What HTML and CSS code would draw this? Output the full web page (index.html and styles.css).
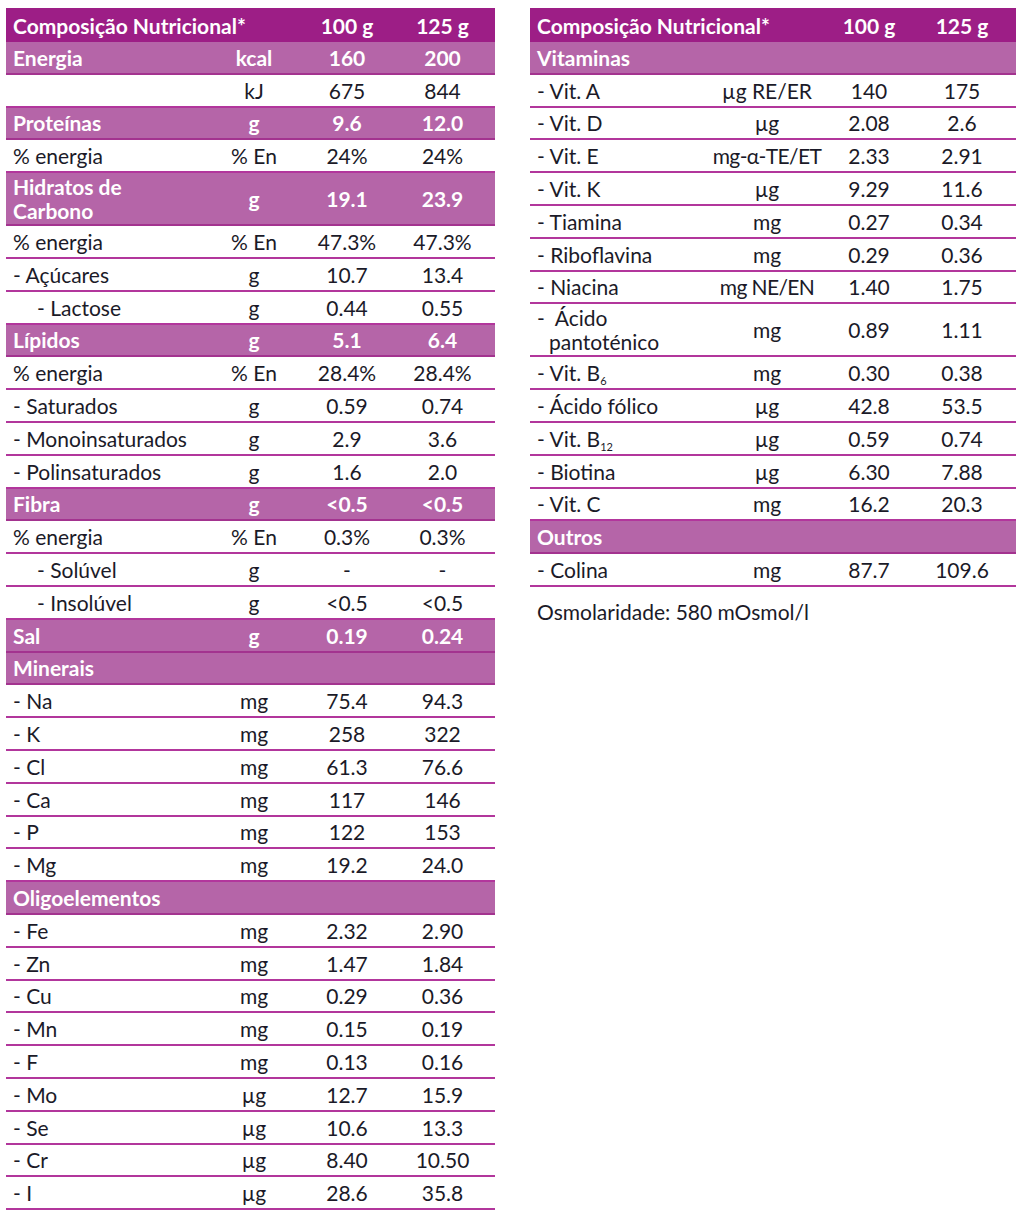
FILE: index.html
```html
<!DOCTYPE html>
<html lang="pt">
<head>
<meta charset="utf-8">
<title>Composição Nutricional</title>
<link rel="stylesheet" href="styles.css">
</head>
<body>
<div class="page">
  <div class="tbl left">
    <div class="row head"><div class="lab">Composição Nutricional*</div><div></div><div>100 g</div><div>125 g</div></div>
    <div class="row sub"><div class="lab">Energia</div><div>kcal</div><div>160</div><div>200</div></div>
    <div class="row"><div class="lab"></div><div>kJ</div><div>675</div><div>844</div></div>
    <div class="row sub"><div class="lab">Proteínas</div><div>g</div><div>9.6</div><div>12.0</div></div>
    <div class="row"><div class="lab">% energia</div><div>% En</div><div>24%</div><div>24%</div></div>
    <div class="row sub dbl"><div class="lab">Hidratos de<br>Carbono</div><div>g</div><div>19.1</div><div>23.9</div></div>
    <div class="row"><div class="lab">% energia</div><div>% En</div><div>47.3%</div><div>47.3%</div></div>
    <div class="row"><div class="lab">- Açúcares</div><div>g</div><div>10.7</div><div>13.4</div></div>
    <div class="row"><div class="lab ind">- Lactose</div><div>g</div><div>0.44</div><div>0.55</div></div>
    <div class="row sub"><div class="lab">Lípidos</div><div>g</div><div>5.1</div><div>6.4</div></div>
    <div class="row"><div class="lab">% energia</div><div>% En</div><div>28.4%</div><div>28.4%</div></div>
    <div class="row"><div class="lab">- Saturados</div><div>g</div><div>0.59</div><div>0.74</div></div>
    <div class="row"><div class="lab">- Monoinsaturados</div><div>g</div><div>2.9</div><div>3.6</div></div>
    <div class="row"><div class="lab">- Polinsaturados</div><div>g</div><div>1.6</div><div>2.0</div></div>
    <div class="row sub"><div class="lab">Fibra</div><div>g</div><div>&lt;0.5</div><div>&lt;0.5</div></div>
    <div class="row"><div class="lab">% energia</div><div>% En</div><div>0.3%</div><div>0.3%</div></div>
    <div class="row"><div class="lab ind">- Solúvel</div><div>g</div><div>-</div><div>-</div></div>
    <div class="row"><div class="lab ind">- Insolúvel</div><div>g</div><div>&lt;0.5</div><div>&lt;0.5</div></div>
    <div class="row sub"><div class="lab">Sal</div><div>g</div><div>0.19</div><div>0.24</div></div>
    <div class="row sub"><div class="lab">Minerais</div><div></div><div></div><div></div></div>
    <div class="row"><div class="lab">- Na</div><div>mg</div><div>75.4</div><div>94.3</div></div>
    <div class="row"><div class="lab">- K</div><div>mg</div><div>258</div><div>322</div></div>
    <div class="row"><div class="lab">- Cl</div><div>mg</div><div>61.3</div><div>76.6</div></div>
    <div class="row"><div class="lab">- Ca</div><div>mg</div><div>117</div><div>146</div></div>
    <div class="row"><div class="lab">- P</div><div>mg</div><div>122</div><div>153</div></div>
    <div class="row"><div class="lab">- Mg</div><div>mg</div><div>19.2</div><div>24.0</div></div>
    <div class="row sub"><div class="lab">Oligoelementos</div><div></div><div></div><div></div></div>
    <div class="row"><div class="lab">- Fe</div><div>mg</div><div>2.32</div><div>2.90</div></div>
    <div class="row"><div class="lab">- Zn</div><div>mg</div><div>1.47</div><div>1.84</div></div>
    <div class="row"><div class="lab">- Cu</div><div>mg</div><div>0.29</div><div>0.36</div></div>
    <div class="row"><div class="lab">- Mn</div><div>mg</div><div>0.15</div><div>0.19</div></div>
    <div class="row"><div class="lab">- F</div><div>mg</div><div>0.13</div><div>0.16</div></div>
    <div class="row"><div class="lab">- Mo</div><div>µg</div><div>12.7</div><div>15.9</div></div>
    <div class="row"><div class="lab">- Se</div><div>µg</div><div>10.6</div><div>13.3</div></div>
    <div class="row"><div class="lab">- Cr</div><div>µg</div><div>8.40</div><div>10.50</div></div>
    <div class="row"><div class="lab">- I</div><div>µg</div><div>28.6</div><div>35.8</div></div>
  </div>
  <div class="col-right">
    <div class="tbl right">
      <div class="row head"><div class="lab">Composição Nutricional*</div><div></div><div>100 g</div><div>125 g</div></div>
      <div class="row sub"><div class="lab">Vitaminas</div><div></div><div></div><div></div></div>
      <div class="row"><div class="lab">- Vit. A</div><div>µg RE/ER</div><div>140</div><div>175</div></div>
      <div class="row"><div class="lab">- Vit. D</div><div>µg</div><div>2.08</div><div>2.6</div></div>
      <div class="row"><div class="lab">- Vit. E</div><div class="tight">mg-α-TE/ET</div><div>2.33</div><div>2.91</div></div>
      <div class="row"><div class="lab">- Vit. K</div><div>µg</div><div>9.29</div><div>11.6</div></div>
      <div class="row"><div class="lab">- Tiamina</div><div>mg</div><div>0.27</div><div>0.34</div></div>
      <div class="row"><div class="lab">- Riboflavina</div><div>mg</div><div>0.29</div><div>0.36</div></div>
      <div class="row"><div class="lab">- Niacina</div><div class="tight">mg NE/EN</div><div>1.40</div><div>1.75</div></div>
      <div class="row dbl"><div class="lab">-&nbsp; Ácido<br><span class="hang">pantoténico</span></div><div>mg</div><div>0.89</div><div>1.11</div></div>
      <div class="row"><div class="lab">- Vit. B<sub>6</sub></div><div>mg</div><div>0.30</div><div>0.38</div></div>
      <div class="row"><div class="lab">- Ácido fólico</div><div>µg</div><div>42.8</div><div>53.5</div></div>
      <div class="row"><div class="lab">- Vit. B<sub>12</sub></div><div>µg</div><div>0.59</div><div>0.74</div></div>
      <div class="row"><div class="lab">- Biotina</div><div>µg</div><div>6.30</div><div>7.88</div></div>
      <div class="row"><div class="lab">- Vit. C</div><div>mg</div><div>16.2</div><div>20.3</div></div>
      <div class="row sub"><div class="lab">Outros</div><div></div><div></div><div></div></div>
      <div class="row"><div class="lab">- Colina</div><div>mg</div><div>87.7</div><div>109.6</div></div>
    </div>
    <p class="note">Osmolaridade: 580 mOsmol/l</p>
  </div>
</div>
</body>
</html>
```

FILE: styles.css
```css
html, body {
  margin: 0;
  padding: 0;
  background: #ffffff;
}
body {
  font-family: Lato, "Liberation Sans", sans-serif;
  font-size: 21px;
  color: #1b1a28;
}
.page {
  display: flex;
  align-items: flex-start;
  gap: 35px;
  padding: 8px 0 0 6px;
}
.tbl {
  display: flex;
  flex-direction: column;
}
.left { width: 489px; }
.col-right { width: 486px; }
.right { width: 486px; }

.row {
  display: grid;
  align-items: center;
  box-sizing: border-box;
  height: 32.8px;
  border-bottom: 2px solid #b2369c;
  text-align: center;
  line-height: 24px;
  padding-top: 1px;
}
.row > div {
  white-space: nowrap;
  display: flex;
  justify-content: center;
  align-items: baseline;
}
.left .row { grid-template-columns: 204px 88px 98px 99px; }
.right .row { grid-template-columns: 180px 114px 90px 102px; }
.row > div:last-child { padding-right: 6px; }
.row > .lab {
  display: block;
  text-align: left;
  padding-left: 7px;
}
.row > .lab.ind { padding-left: 31px; }
.row > .tight { letter-spacing: -0.6px; }
.row.dbl { height: 53px; }
.hang { padding-left: 12px; }

.row.head {
  height: 34px;
  background: #9d1e86;
  color: #ffffff;
  font-weight: 700;
  border-bottom: none;
}
.row.sub {
  background: #b565a8;
  color: #ffffff;
  font-weight: 700;
  border-bottom: 2px solid #a3338f;
}
sub {
  font-size: 11px;
  line-height: 0;
  vertical-align: -4px;
}
.note {
  margin: 13px 0 0 0;
  padding-left: 7px;
  line-height: 24px;
}
```
